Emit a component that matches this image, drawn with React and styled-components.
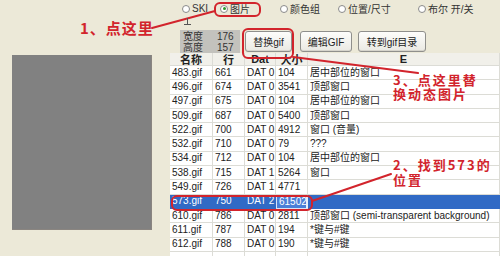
import React from "react";
import styled, { createGlobalStyle } from "styled-components";

const GlobalStyle = createGlobalStyle`
  html, body {
    margin: 0;
    padding: 0;
    width: 500px;
    height: 256px;
    overflow: hidden;
    background: #ece9d8;
  }
  * { box-sizing: border-box; }
`;

const Screen = styled.div`
  position: relative;
  display: flex;
  width: 500px;
  height: 256px;
  background: #ece9d8;
  font-family: "Liberation Sans", "Noto Sans CJK SC", sans-serif;
  font-size: 10px;
  color: #222;
  overflow: hidden;
`;

const LeftPane = styled.div`
  width: 170px;
  flex-shrink: 0;
  padding: 55px 0 0 12px;
`;

const Preview = styled.div`
  width: 140px;
  height: 175px;
  background: #818181;
  border-right: 1px solid #8a8580;
  border-bottom: 1px solid #8a8580;
`;

const RightPane = styled.div`
  flex: 1;
  display: flex;
  flex-direction: column;
  min-width: 0;
`;

const RadioRow = styled.div`
  display: flex;
  align-items: center;
  height: 13px;
  margin-top: 2px;
  padding-left: 12px;
`;

const Radio = styled.label`
  display: flex;
  align-items: center;
  gap: 2px;
  width: ${(p) => p.$w}px;
  flex-shrink: 0;
  color: #333;
  white-space: nowrap;
`;

const Dot = styled.span`
  position: relative;
  width: 8px;
  height: 8px;
  border-radius: 50%;
  border: 1px solid #8a8a8a;
  background: #fff;

  &::after {
    content: "";
    display: ${(p) => (p.$on ? "block" : "none")};
    position: absolute;
    left: 1.5px;
    top: 1.5px;
    width: 3px;
    height: 3px;
    border-radius: 50%;
    background: #2c9a2c;
  }
`;

const ToolRow = styled.div`
  display: flex;
  align-items: center;
  gap: 6px;
  height: 24px;
  margin-top: 15px;
  padding-left: 10px;
`;

const InfoBox = styled.div`
  display: grid;
  grid-template-columns: 34px 26px;
  width: 60px;
  height: 23px;
  padding: 1px 0 0 3px;
  background: #c3c2bd;
  color: #333;
  line-height: 11px;
`;

const Button = styled.button`
  height: 21px;
  width: ${(p) => p.$w}px;
  margin-left: ${(p) => p.$ml || 0}px;
  padding: 0;
  font-family: "Liberation Sans", "Noto Sans CJK SC", sans-serif;
  font-size: 10px;
  color: #222;
  border: 1px solid #8f8f8c;
  border-radius: 3px;
  background: linear-gradient(#fdfdfb, #eae9e3);
  box-shadow: inset 0 -1px 0 #d6d4cc;
`;

const Table = styled.div`
  flex: 1;
  background: #fff;
`;

const Row = styled.div`
  display: grid;
  grid-template-columns: 43px 32px 31px 32px 1fr;
  height: ${(p) => (p.$head ? 13 : 14.3)}px;
  background: ${(p) => (p.$head ? "#f1f0ea" : p.$sel ? "#316ac5" : "#fff")};
  color: ${(p) => (p.$sel ? "#fff" : "#222")};
  font-weight: ${(p) => (p.$head ? "bold" : "normal")};
  font-size: ${(p) => (p.$head ? 11 : 10)}px;
`;

const Cell = styled.div`
  display: flex;
  align-items: center;
  justify-content: ${(p) => (p.$center ? "center" : "flex-start")};
  padding-left: ${(p) => (p.$center ? 0 : 2)}px;
  border-right: 1px solid ${(p) => (p.$sel ? "#316ac5" : "#dcdcd6")};
  border-bottom: 1px solid ${(p) => (p.$sel ? "#316ac5" : "#dcdcd6")};
  white-space: nowrap;
  overflow: hidden;
  ${(p) =>
    p.$focus &&
    `
    background: #4a7fd8;
    border: 1px solid #d8e4f8;
    border-right: 2px solid #e6eefb;
  `}
`;

const CellText = styled.span`
  line-height: 12px;
`;

const Note = styled.div`
  position: absolute;
  left: ${(p) => p.$x}px;
  top: ${(p) => p.$y}px;
  color: #d2242c;
  font-family: "Noto Sans CJK SC", sans-serif;
  font-weight: bold;
  font-size: ${(p) => p.$size || 13}px;
  line-height: ${(p) => p.$lh || 14}px;
  letter-spacing: ${(p) => p.$ls || 2}px;
  white-space: nowrap;
`;

const Overlay = styled.svg`
  position: absolute;
  left: 0;
  top: 0;
  pointer-events: none;
`;

const rows = [
  ["483.gif", "661", "DAT 0", "104", "居中部位的窗口"],
  ["496.gif", "674", "DAT 0", "3541", "顶部窗口"],
  ["497.gif", "675", "DAT 0", "104", "居中部位的窗口"],
  ["509.gif", "687", "DAT 0", "5400", "顶部窗口"],
  ["522.gif", "700", "DAT 0", "4912", "窗口 (音量)"],
  ["532.gif", "710", "DAT 0", "79", "???"],
  ["534.gif", "712", "DAT 0", "104", "居中部位的窗口"],
  ["538.gif", "715", "DAT 1", "5264", "窗口"],
  ["549.gif", "726", "DAT 1", "4771", ""],
  ["573.gif", "750", "DAT 2", "61502", "", true],
  ["610.gif", "786", "DAT 0", "2811", "顶部窗口 (semi-transparent background)"],
  ["611.gif", "787", "DAT 0", "194", "*键与#键"],
  ["612.gif", "788", "DAT 0", "190", "*键与#键"],
  ["", "", "", "", ""],
];

const radios = [
  { label: "SKI", w: 38 },
  { label: "图片", w: 60, on: true },
  { label: "颜色组", w: 58 },
  { label: "位置/尺寸", w: 80 },
  { label: "布尔 开/关", w: 80 },
];

export default function App() {
  return (
    <Screen>
      <GlobalStyle />
      <LeftPane>
        <Preview />
      </LeftPane>
      <RightPane>
        <RadioRow>
          {radios.map((r) => (
            <Radio key={r.label} $w={r.w}>
              <Dot $on={r.on} />
              {r.label}
            </Radio>
          ))}
        </RadioRow>
        <ToolRow>
          <InfoBox>
            <span>宽度</span>
            <span>176</span>
            <span>高度</span>
            <span>157</span>
          </InfoBox>
          <Button $w={47} $ml={-1}>替换gif</Button>
          <Button $w={52} $ml={2}>编辑GIF</Button>
          <Button $w={68}>转到gif目录</Button>
        </ToolRow>
        <Table>
          <Row $head>
            <Cell $center>名称</Cell>
            <Cell $center>行</Cell>
            <Cell $center>Dat</Cell>
            <Cell $center>大小</Cell>
            <Cell $center>E</Cell>
          </Row>
          {rows.map((r, i) => (
            <Row key={i} $sel={r[5]}>
              <Cell $sel={r[5]}><CellText>{r[0]}</CellText></Cell>
              <Cell $sel={r[5]}><CellText>{r[1]}</CellText></Cell>
              <Cell $sel={r[5]}><CellText>{r[2]}</CellText></Cell>
              <Cell $sel={r[5]} $focus={r[5]}><CellText>{r[3]}</CellText></Cell>
              <Cell $sel={r[5]}><CellText>{r[4]}</CellText></Cell>
            </Row>
          ))}
        </Table>
      </RightPane>

      <Overlay width="500" height="256" viewBox="0 0 500 256">
        <g fill="none" stroke="#d2242c" strokeWidth="2" strokeLinecap="round">
          <rect x="215" y="3" width="45" height="13" rx="5" />
          <rect x="243" y="29" width="50" height="29" rx="5" />
          <rect x="172" y="196" width="140" height="14" rx="5" />
          <line x1="152" y1="28" x2="215" y2="11" />
          <line x1="293" y1="57" x2="418" y2="73" />
          <line x1="391" y1="174" x2="312" y2="201" />
        </g>
        <g stroke="#555" strokeWidth="1">
          <line x1="187.5" y1="18" x2="187.5" y2="24" />
          <line x1="184" y1="24.5" x2="191" y2="24.5" />
        </g>
      </Overlay>

      <Note $x={80} $y={20} $size={15} $lh={16} $ls={1}>1、点这里</Note>
      <Note $x={393} $y={73}>3、点这里替<br />换动态图片</Note>
      <Note $x={393} $y={157} $lh={15}>2、找到573的<br />位置</Note>
    </Screen>
  );
}
